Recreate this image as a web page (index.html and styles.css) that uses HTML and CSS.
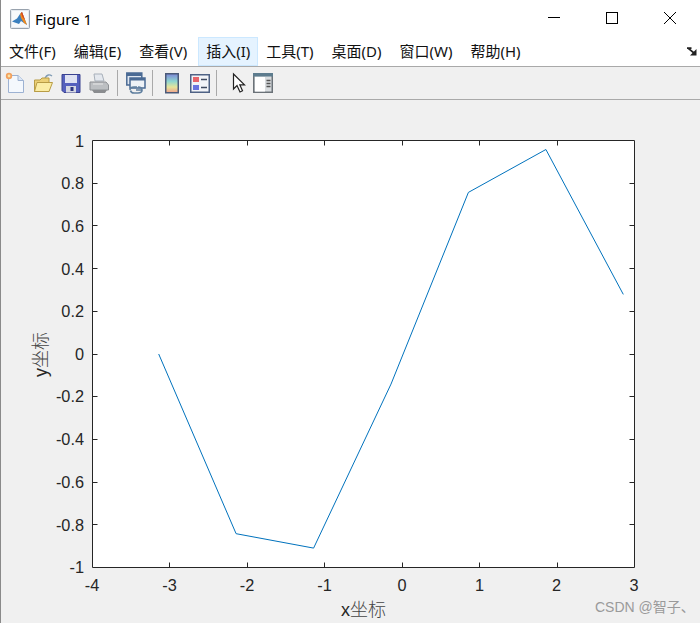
FILE: index.html
```html
<!DOCTYPE html>
<html lang="zh">
<head>
<meta charset="utf-8">
<title>Figure 1</title>
<link rel="stylesheet" href="styles.css">
</head>
<body>
<div class="window">
  <header class="titlebar">
    <svg class="app-icon" width="20" height="20" viewBox="0 0 20 20">
      <rect x="0.5" y="0.5" width="19" height="19" rx="1" fill="#e3e8ee" stroke="#98a2ad"/>
      <rect x="2" y="2" width="16" height="16" fill="#f7f9fb"/>
      <path d="M2 12.5 L7 9.5 L10 5 L12 3 L17 16 L14 14 L11 12 L9 15 Z" fill="#3a7fbe"/>
      <path d="M10 5 L12 3 L17 16 L14 14 L11 9 Z" fill="#ee8a1e"/>
      <path d="M11 4 L12 3 L15 11 L12.5 8 Z" fill="#d9431c"/>
    </svg>
    <span class="title">Figure 1</span>
    <div class="window-controls">
      <svg class="ctl" width="46" height="36" viewBox="0 0 46 36"><path d="M17 17.5 H29" stroke="#000" fill="none"/></svg>
      <svg class="ctl" width="46" height="36" viewBox="0 0 46 36"><rect x="17.5" y="12.5" width="11" height="11" stroke="#000" fill="none"/></svg>
      <svg class="ctl" width="46" height="36" viewBox="0 0 46 36"><path d="M17 12 L29 24 M29 12 L17 24" stroke="#000" fill="none"/></svg>
    </div>
  </header>
  <nav class="menubar">
    <span class="menu-item">文件(F)</span>
    <span class="menu-item">编辑(E)</span>
    <span class="menu-item before-active">查看(V)</span>
    <span class="menu-item active">插入(I)</span>
    <span class="menu-item">工具(T)</span>
    <span class="menu-item">桌面(D)</span>
    <span class="menu-item">窗口(W)</span>
    <span class="menu-item">帮助(H)</span>
    <svg class="dock" width="10" height="9" viewBox="0 0 10 9"><path d="M0 1.2 H4.5 M1 1.2 L7 6" stroke="#222" stroke-width="1.7" fill="none"/><path d="M9.5 2 V8.5 H3 Z" fill="#222"/></svg>
  </nav>
  <div class="toolbar">
    <svg class="tool" width="20" height="22" viewBox="0 0 20 22">
      <path d="M3.5 3.5 H13 L18.5 8.5 V20.5 H3.5 Z" fill="#f4f8fd" stroke="#9db2d2"/>
      <path d="M13 3.5 V8.5 H18.5" fill="#dbe6f5" stroke="#9db2d2"/>
      <circle cx="4" cy="4" r="3.2" fill="#f2a15e"/><circle cx="4" cy="4" r="1.4" fill="#fbe3a6"/>
    </svg>
    <svg class="tool" width="20" height="22" viewBox="0 0 20 22">
      <path d="M12 6 Q15 1 19 4" stroke="#7f9bb5" stroke-width="1.4" fill="none"/>
      <path d="M1.5 8 H7 L9 6 H16 V19.5 H1.5 Z" fill="#ecd076" stroke="#b89c45"/>
      <path d="M1.5 19.5 L4 10.5 H19.5 L16 19.5 Z" fill="#fbeda5" stroke="#b89c45"/>
    </svg>
    <svg class="tool" width="20" height="22" viewBox="0 0 20 22">
      <path d="M1 2.5 H19 V20.5 H3 L1 18.5 Z" fill="#5560bd" stroke="#3a4290"/>
      <rect x="4" y="3" width="12" height="8" fill="#dfe2f2"/>
      <rect x="5" y="14" width="10" height="6.5" fill="#d6d8e2"/>
      <rect x="9.5" y="15" width="3" height="4" fill="#2d3580"/>
    </svg>
    <svg class="tool" width="20" height="22" viewBox="0 0 20 22">
      <path d="M5 2 H13 L15 9 H6 Z" fill="#e4e8ee" stroke="#a8b0ba"/>
      <path d="M1 10 H17 L19.5 13 V18 H1 Z" fill="#bcbfc2" stroke="#8d9094"/>
      <path d="M3 18 H18 L16 21 H5 Z" fill="#8b8d90"/>
      <path d="M4 12 H14" stroke="#e8e8e8"/>
    </svg>
    <i class="sep"></i>
    <svg class="tool tight" width="20" height="24" viewBox="0 0 20 24">
      <rect x="0.8" y="2" width="15" height="12" fill="#dfe6f0" stroke="#4a6a94" stroke-width="1.5"/>
      <rect x="0.8" y="2" width="15" height="3" fill="#4a6a94"/>
      <rect x="4" y="7" width="15" height="10" fill="#eef2f7" stroke="#4a6a94" stroke-width="1.5"/>
      <rect x="4" y="7" width="15" height="2.5" fill="#4a6a94"/>
      <path d="M4 19 Q4 16 8 16 H11 M16 19 Q16 22 12 22 H8 Q5 22 4.5 19.5 M10 19 H16 Q16 16 12 16" stroke="#5f7f9f" stroke-width="1.6" fill="none"/>
    </svg>
    <i class="sep"></i>
    <svg class="tool narrow" width="14" height="22" viewBox="0 0 14 22">
      <defs>
        <linearGradient id="cb" x1="0" y1="0" x2="0" y2="1">
          <stop offset="0" stop-color="#7d86d8"/><stop offset=".4" stop-color="#8fd6d0"/>
          <stop offset=".7" stop-color="#e6e59a"/><stop offset="1" stop-color="#f0a08c"/>
        </linearGradient>
      </defs>
      <rect x="0.75" y="1.75" width="12.5" height="19" fill="url(#cb)" stroke="#4b5a78" stroke-width="1.5"/>
    </svg>
    <svg class="tool tight" width="20" height="22" viewBox="0 0 20 22">
      <rect x="0.75" y="2.75" width="18.5" height="17.5" fill="#f2f4f8" stroke="#4f6285" stroke-width="1.5"/>
      <rect x="3" y="5" width="6" height="5" fill="#e8646a"/>
      <rect x="3" y="13" width="6" height="5" fill="#6a74e0"/>
      <path d="M11 7.5 H17 M11 15.5 H17" stroke="#3f4a60" stroke-width="1.5"/>
    </svg>
    <i class="sep"></i>
    <svg class="tool cursor" width="14" height="22" viewBox="0 0 14 22">
      <path d="M1.5 2 V17 L5 13.5 L8 20 L10.5 18.8 L7.8 12.8 H12.5 Z" fill="#fff" stroke="#222" stroke-width="1.2"/>
    </svg>
    <svg class="tool panel" width="20" height="22" viewBox="0 0 20 22">
      <rect x="0.75" y="2.75" width="18.5" height="17.5" fill="#d8dcdf" stroke="#6b7278" stroke-width="1.5"/>
      <rect x="0" y="1" width="20" height="3.5" fill="#5d7c8e"/>
      <rect x="2" y="5" width="10" height="14.5" fill="#fff"/>
      <path d="M13.5 8.5 H17.5 M13.5 11.5 H17.5 M13.5 14.5 H17.5" stroke="#555" stroke-width="1.4"/>
    </svg>
  </div>
  <svg class="figure" width="699" height="523" viewBox="1 100 699 523">
    <rect x="92.5" y="140.5" width="542" height="427" fill="#fff"/>
    <path class="tick" d="M92.5 140.5V567.5H634.5V140.5Z"/>
    <path class="tick" d="M169.5 567.5v-5M247.5 567.5v-5M324.5 567.5v-5M402.5 567.5v-5M479.5 567.5v-5M557.5 567.5v-5
      M169.5 140.5v5M247.5 140.5v5M324.5 140.5v5M402.5 140.5v5M479.5 140.5v5M557.5 140.5v5
      M92.5 183.5h5M92.5 225.5h5M92.5 268.5h5M92.5 311.5h5M92.5 354.5h5M92.5 396.5h5M92.5 439.5h5M92.5 482.5h5M92.5 524.5h5
      M634.5 183.5h-5M634.5 225.5h-5M634.5 268.5h-5M634.5 311.5h-5M634.5 354.5h-5M634.5 396.5h-5M634.5 439.5h-5M634.5 482.5h-5M634.5 524.5h-5"/>
    <polyline class="line" points="158.7,354 236.1,533.7 313.6,548.1 391,384.1 468.4,192.4 545.9,149.5 623.3,294.4"/>
    <g class="ylabels">
      <text x="84" y="147">1</text><text x="84" y="189">0.8</text><text x="84" y="232">0.6</text>
      <text x="84" y="275">0.4</text><text x="84" y="317">0.2</text><text x="84" y="360">0</text>
      <text x="84" y="402">-0.2</text><text x="84" y="445">-0.4</text><text x="84" y="488">-0.6</text>
      <text x="84" y="531">-0.8</text><text x="84" y="573">-1</text>
    </g>
    <g class="xlabels">
      <text x="92" y="591">-4</text><text x="169.5" y="591">-3</text><text x="247" y="591">-2</text>
      <text x="324.5" y="591">-1</text><text x="402" y="591">0</text><text x="479.5" y="591">1</text>
      <text x="556.5" y="591">2</text><text x="634" y="591">3</text>
    </g>
    <text class="axis-label" x="363.5" y="616" text-anchor="middle">x<tspan class="cjk">坐标</tspan></text>
    <text class="axis-label" transform="translate(47 354.5) rotate(-90)" text-anchor="middle">y<tspan class="cjk">坐标</tspan></text>
    <text class="watermark" x="595" y="612">CSDN @智子、</text>
  </svg>
</div>
</body>
</html>
```
FILE: styles.css
```css
html, body {
  margin: 0;
  padding: 0;
  background: #f0f0f0;
  overflow: hidden;
}
.window {
  width: 700px;
  height: 623px;
  box-sizing: border-box;
  border-left: 1px solid #8a8a8a;
  display: flex;
  flex-direction: column;
  font-family: "Noto Sans", "Noto Sans CJK SC", sans-serif;
  color: #111;
}
.titlebar {
  height: 37px;
  background: #fff;
  display: flex;
  align-items: center;
  padding-left: 9px;
  box-sizing: border-box;
}
.app-icon { flex: none; }
.title {
  margin-left: 5px;
  font-size: 15px;
  font-family: "Noto Sans", "Liberation Sans", sans-serif;
  color: #000;
}
.window-controls {
  margin-left: auto;
  align-self: flex-start;
  display: flex;
  gap: 12px;
  padding-right: 7px;
}
.ctl { display: block; }
.menubar {
  height: 29px;
  background: #fff;
  display: flex;
  align-items: center;
  border-bottom: 1px solid #a9a9a9;
  font-size: 15px;
}
.menu-item {
  height: 29px;
  line-height: 29px;
  padding: 0 8px;
  margin-right: 2px;
  box-sizing: border-box;
  white-space: nowrap;
}
.menu-item.before-active { margin-right: 3px; }
.menu-item.active {
  margin-right: 0;
  padding-right: 8px;
  background: #e5f3ff;
  box-shadow: inset 0 0 0 1px #cce8ff;
}
.dock {
  margin-left: auto;
  margin-right: 3px;
}
.toolbar {
  height: 33px;
  box-sizing: border-box;
  background: #f0f0f0;
  border-bottom: 1px solid #a9a9a9;
  display: flex;
  align-items: center;
  padding-left: 4px;
}
.tool {
  flex: none;
  margin-right: 8px;
  display: block;
}
.tool.tight { margin-right: 6px; }
.tool.narrow { margin-left: 4px; margin-right: 11px; }
.tool.cursor { margin-left: 7px; margin-right: 7px; }
.sep {
  flex: none;
  width: 1px;
  height: 26px;
  background: #a9a9a9;
  margin-right: 8px;
}
.figure {
  display: block;
  flex: none;
}
.tick {
  fill: none;
  stroke: #262626;
  stroke-width: 1;
}
.line {
  fill: none;
  stroke: #0072bd;
  stroke-width: 1;
}
.ylabels text, .xlabels text {
  font-family: "Liberation Sans", Arial, sans-serif;
  font-size: 16.3px;
  fill: #262626;
}
.ylabels text { text-anchor: end; }
.xlabels text { text-anchor: middle; }
.axis-label {
  font-family: "Liberation Sans", "Noto Sans CJK SC", sans-serif;
  font-size: 18px;
  fill: #262626;
}
.axis-label .cjk {
  font-family: "Noto Sans CJK SC", sans-serif;
  font-weight: 300;
  fill: #444;
}
.watermark {
  font-family: "Liberation Sans", "Noto Sans CJK SC", sans-serif;
  font-size: 14px;
  fill: #9a9a9a;
}
```
